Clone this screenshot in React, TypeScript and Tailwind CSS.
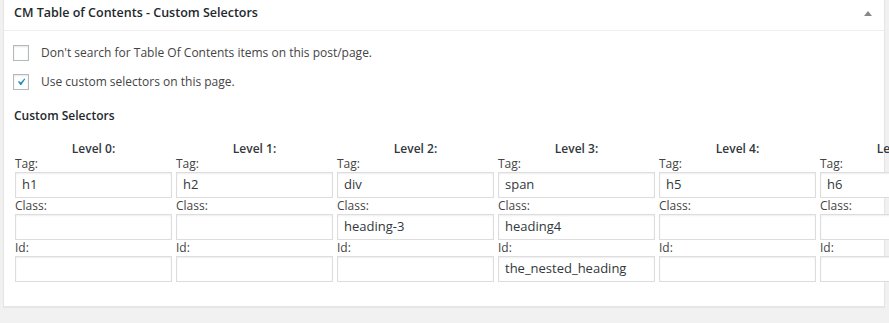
import React from 'react';

const levels = [
  { tag: 'h1', cls: '', id: '' },
  { tag: 'h2', cls: '', id: '' },
  { tag: 'div', cls: 'heading-3', id: '' },
  { tag: 'span', cls: 'heading4', id: 'the_nested_heading' },
  { tag: 'h5', cls: '', id: '' },
  { tag: 'h6', cls: '', id: '' },
];

const Field = ({ label, value }: { label: string; value: string }) => (
  <>
    <div className="h-[16px] text-[12px] leading-[16px] text-[#444]">{label}</div>
    <div className="flex h-[26px] items-center border border-[#ddd] bg-white px-[6px] text-[13px] text-[#32373c] shadow-[inset_0_1px_2px_rgba(0,0,0,0.07)]">
      {value}
    </div>
  </>
);

const Checkbox = ({ checked, label }: { checked?: boolean; label: string }) => (
  <label className="flex h-[29px] items-center">
    <span className="ml-[9px] mr-[12px] flex h-[16px] w-[16px] items-center justify-center border border-[#b4b9be] bg-white shadow-[inset_0_1px_2px_rgba(0,0,0,0.1)]">
      {checked && (
        <svg viewBox="0 0 20 20" className="h-[16px] w-[16px]">
          <path d="M14.83 4.89l1.34.94-5.81 8.38H9.02L5.78 9.67l1.34-1.25 2.57 2.4z" fill="#1e8cbe" />
        </svg>
      )}
    </span>
    <span className="text-[12px] text-[#444]">{label}</span>
  </label>
);

export default function App() {
  return (
    <div className="h-[323px] w-[889px] overflow-hidden bg-[#f1f1f1] font-['Open_Sans',sans-serif]">
      <div className="ml-[3px] w-[882px] border border-t-0 border-[#e5e5e5] bg-white shadow-[0_1px_1px_rgba(0,0,0,0.04)]">
        <div className="flex h-[31px] items-center justify-between border-b border-[#eee] pb-[3px] pl-[10px] pr-[12px]">
          <h2 className="text-[12.5px] font-semibold text-[#23282d]">CM Table of Contents - Custom Selectors</h2>
          <span className="h-0 w-0 border-x-[4px] border-b-[5px] border-x-transparent border-b-[#888]" />
        </div>
        <div className="pb-[24px] pt-[7px]">
          <Checkbox label="Don't search for Table Of Contents items on this post/page." />
          <Checkbox checked label="Use custom selectors on this page." />
          <div className="mt-[10px] h-[20px] pl-[10px] text-[12px] font-semibold leading-[20px] text-[#23282d]">
            Custom Selectors
          </div>
          <div className="mt-[14px] flex gap-[4px] pl-[11px]">
            {levels.map((lv, i) => (
              <div key={i} className="w-[157px] shrink-0">
                <div className="h-[16px] pt-[1px] text-center text-[12px] font-semibold leading-[16px] text-[#32373c]">
                  Level {i}:
                </div>
                <Field label="Tag:" value={lv.tag} />
                <Field label="Class:" value={lv.cls} />
                <Field label="Id:" value={lv.id} />
              </div>
            ))}
          </div>
        </div>
      </div>
    </div>
  );
}
